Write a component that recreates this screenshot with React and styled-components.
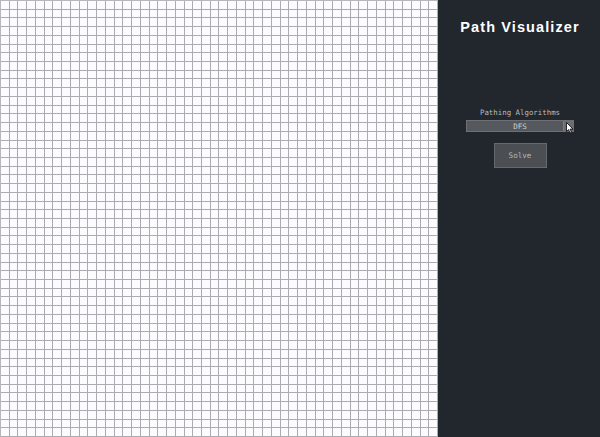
import React from "react";
import styled, { createGlobalStyle } from "styled-components";

const Global = createGlobalStyle`
  html, body { margin: 0; padding: 0; height: 100%; overflow: hidden; }
  #root { height: 100%; }
  * { box-sizing: border-box; }
`;

const Page = styled.div`
  display: flex;
  height: 100vh;
  width: 100vw;
`;

const Board = styled.div`
  width: 73%;
  height: 100%;
  display: grid;
  grid-template-columns: repeat(50, 1fr);
  grid-template-rows: repeat(50, 1fr);
  background: #ffffff;
  border-left: 1px solid #b6b6bb;
  border-top: 1px solid #b6b6bb;
`;

const Cell = styled.div`
  background: #fcfbfd;
  border-right: 1px solid #acabb1;
  border-bottom: 1px solid #acabb1;
`;

const Sidebar = styled.aside`
  flex: 1;
  background: #22262d;
  display: flex;
  flex-direction: column;
  align-items: center;
  padding-top: 18px;
  padding-left: 2px;
`;

const Title = styled.h1`
  margin: 0;
  color: #ffffff;
  font-family: "Liberation Sans", Arial, sans-serif;
  font-weight: 700;
  font-size: 14.5px;
  letter-spacing: 1.1px;
  line-height: 18px;
`;

const Controls = styled.div`
  margin-top: 72px;
  display: flex;
  flex-direction: column;
  align-items: center;
`;

const Label = styled.label`
  font-family: "DejaVu Sans Mono", monospace;
  font-size: 7.4px;
  color: #b9bbbe;
  line-height: 10px;
`;

const SelectWrap = styled.div`
  position: relative;
  margin-top: 2px;
  width: 108px;
  height: 12px;
  background: #55585c;
  border: 1px solid #6d7074;
  display: flex;
  align-items: center;
  justify-content: center;
  font-family: "DejaVu Sans Mono", monospace;
  font-size: 7.5px;
  color: #cfd0d2;
`;

const Arrow = styled.span`
  position: absolute;
  right: 0;
  top: 0;
  bottom: 0;
  width: 10px;
  background: #6a6d71;
  border-left: 1px solid #7a7d80;
`;

const Pointer = styled.svg`
  position: absolute;
  left: 99px;
  top: 1px;
`;

const SolveButton = styled.button`
  margin-top: 11px;
  width: 53px;
  height: 25px;
  background: #4b4e52;
  border: 1px solid #65686c;
  color: #b7b8ba;
  font-family: "DejaVu Sans Mono", monospace;
  font-size: 7.6px;
  padding: 0;
`;

export default function App() {
  const cells = Array.from({ length: 2500 });
  return (
    <>
      <Global />
      <Page>
        <Board>
          {cells.map((_, i) => (
            <Cell key={i} />
          ))}
        </Board>
        <Sidebar>
          <Title>Path Visualizer</Title>
          <Controls>
            <Label>Pathing Algorithms</Label>
            <SelectWrap>
              DFS
              <Arrow />
              <Pointer width="8" height="12" viewBox="0 0 8 12">
                <path
                  d="M0.5 0.5 L0.5 9.5 L2.6 7.6 L4 11 L5.5 10.4 L4.1 7.1 L7 7.1 Z"
                  fill="#ffffff"
                  stroke="#000000"
                  strokeWidth="0.8"
                  strokeLinejoin="round"
                />
              </Pointer>
            </SelectWrap>
            <SolveButton>Solve</SolveButton>
          </Controls>
        </Sidebar>
      </Page>
    </>
  );
}
